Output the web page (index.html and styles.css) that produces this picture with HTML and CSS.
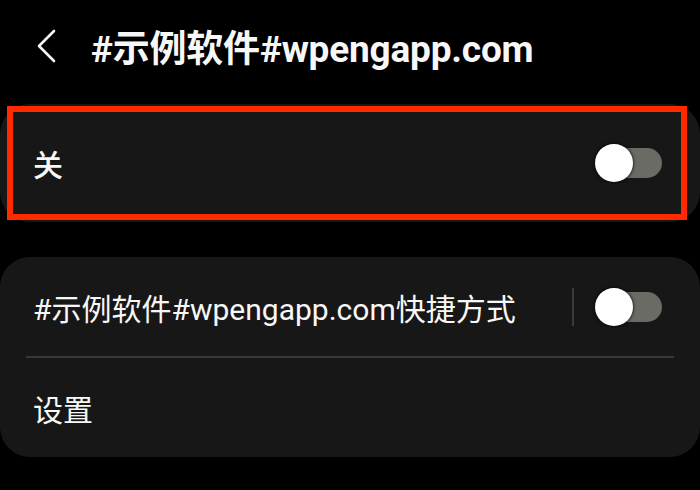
FILE: index.html
```html
<!DOCTYPE html>
<html lang="zh-CN">
<head>
  <meta charset="UTF-8">
  <meta name="viewport" content="width=device-width, initial-scale=1.0">
  <title>#示例软件#wpengapp.com</title>
  <link rel="stylesheet" href="styles.css">
</head>
<body>
  <div class="top-bar">
    <a class="back" href="#">
      <svg width="20" height="34" viewBox="0 0 20 34">
        <path d="M18 2 L3 17 L18 32" fill="none" stroke="#f4f4f4" stroke-width="2.6" stroke-linecap="round" stroke-linejoin="round"/>
      </svg>
    </a>
    <h1>#示例软件#wpengapp.com</h1>
  </div>

  <div class="card master">
    <div class="row">
      <span class="label">关</span>
      <div class="switch"><span class="thumb"></span></div>
    </div>
    <div class="highlight"></div>
  </div>

  <div class="card">
    <div class="row">
      <span class="label">#示例软件#wpengapp.com快捷方式</span>
      <div class="row-end">
        <span class="sep"></span>
        <div class="switch"><span class="thumb"></span></div>
      </div>
    </div>
    <div class="divider"></div>
    <div class="row">
      <span class="label">设置</span>
    </div>
  </div>
</body>
</html>
```

FILE: styles.css
```css
body {
  font-family: Roboto, "Noto Sans CJK SC", sans-serif;
  margin: 0;
  background-color: #000;
  color: #f7f7f7;
  overflow: hidden;
}

.top-bar {
  display: flex;
  align-items: center;
  height: 92px;
  padding-left: 36px;
  margin-bottom: 12px;
}

.back {
  display: flex;
  width: 20px;
  height: 34px;
}

.top-bar h1 {
  margin: 0 0 0 35px;
  font-size: 37px;
  font-weight: 700;
  letter-spacing: -0.2px;
}

.card {
  position: relative;
  background-color: #171717;
  border-radius: 30px;
  width: 700px;
}

.master {
  height: 118px;
  display: flex;
  flex-direction: column;
  justify-content: center;
}

.master + .card {
  margin-top: 35px;
}

.row {
  display: flex;
  align-items: center;
  justify-content: space-between;
  height: 99px;
  padding: 0 38px 0 33px;
}

.label {
  font-size: 30px;
}

.master .label {
  font-weight: 500;
}

.row-end {
  display: flex;
  align-items: center;
}

.sep {
  width: 2px;
  height: 38px;
  background-color: #3a3a3a;
  margin-right: 21px;
}

.switch {
  position: relative;
  width: 64px;
  height: 30px;
  margin-left: 3px;
  background-color: #6b6b66;
  border-radius: 15px;
}

.thumb {
  position: absolute;
  left: -3px;
  top: -4px;
  width: 38px;
  height: 38px;
  border-radius: 50%;
  background-color: #fff;
  box-shadow: 0 0 3px 1px rgba(0, 0, 0, 0.6);
}

.divider {
  height: 2px;
  margin: 0 26px;
  background-color: #383838;
}

.highlight {
  position: absolute;
  top: 2px;
  left: 7px;
  right: 13px;
  bottom: 2px;
  border: 6px solid #ff2a00;
}
```
